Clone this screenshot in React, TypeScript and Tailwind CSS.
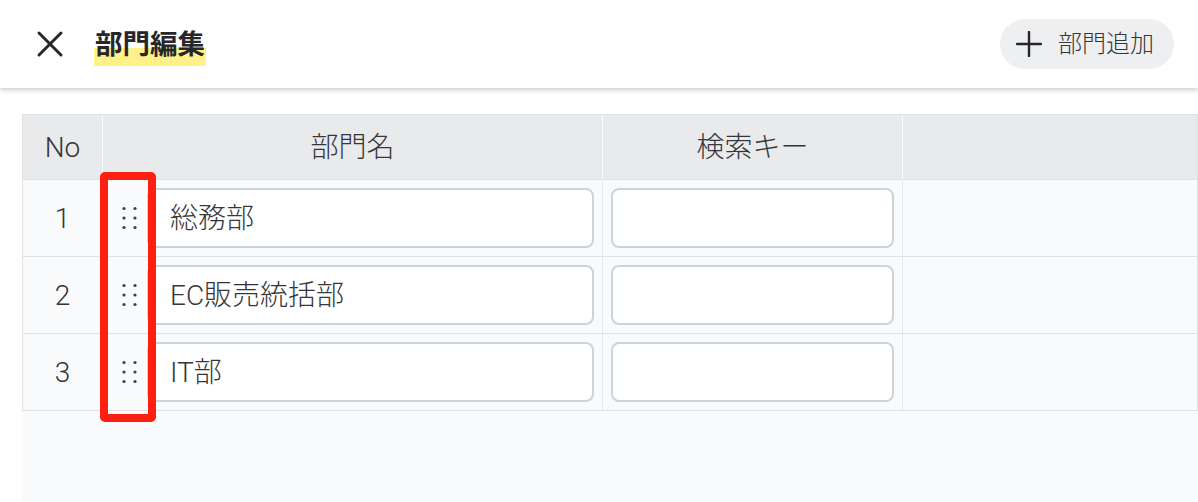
import React from "react";

const font = "font-['Roboto','Noto_Sans_CJK_JP',sans-serif]";

function Grip() {
  return (
    <svg width="16" height="24" viewBox="0 0 16 24" className="text-[#3f3f46]" fill="currentColor">
      {[2.5, 12, 21.5].map((y) => (
        <g key={y}>
          <circle cx="2" cy={y} r="1.6" />
          <circle cx="13" cy={y} r="1.6" />
        </g>
      ))}
    </svg>
  );
}

const rows = [
  { no: "1", name: "総務部" },
  { no: "2", name: "EC販売統括部" },
  { no: "3", name: "IT部" },
];

export default function App() {
  return (
    <div className={`${font} h-[502px] w-[1198px] overflow-hidden bg-white text-[#35363a]`}>
      <header className="relative z-10 flex h-[88px] items-center justify-between bg-white pl-[36px] pr-[24px] shadow-[0_2px_5px_rgba(0,0,0,0.2)]">
        <div className="flex items-center gap-[30px]">
          <svg width="28" height="28" viewBox="0 0 28 28" fill="none" stroke="#27272a" strokeWidth="3" strokeLinecap="round">
            <path d="M3 3 L25 25 M25 3 L3 25" />
          </svg>
          <h1 className="w-[112px] whitespace-nowrap bg-[linear-gradient(transparent_58%,#fff08a_58%)] pl-px pt-px text-[27.5px] leading-[43px] font-bold text-[#27272a]">
            部門編集
          </h1>
        </div>
        <button className="flex h-[50px] w-[174px] items-center gap-[16px] rounded-full bg-[#eeeff1] pl-[16px] text-[24px] font-light text-[#35363a]">
          <svg width="26" height="26" viewBox="0 0 26 26" fill="none" stroke="#27272a" strokeWidth="2.4" strokeLinecap="round">
            <path d="M13 1 V25 M1 13 H25" />
          </svg>
          部門追加
        </button>
      </header>

      <main className="pl-[22px] pt-[26px]">
        <div className="relative h-[388px] bg-[#f9fafb]">
          <div className="grid h-[66px] grid-cols-[80px_500px_300px_1fr] border border-[#dfe1e5] bg-[#e9eaec] text-[28px] font-light">
            <div className="flex items-center justify-center border-r border-[#f9fafb] pt-px">No</div>
            <div className="flex items-center justify-center border-r border-[#f9fafb] pt-px">部門名</div>
            <div className="flex items-center justify-center border-r border-[#f9fafb] pt-px">検索キー</div>
            <div />
          </div>
          {rows.map((r) => (
            <div
              key={r.no}
              className="grid h-[77px] grid-cols-[80px_500px_300px_1fr] border-x border-b border-[#dfe1e5] text-[28px] font-light"
            >
              <div className="flex items-center justify-center border-r border-[#e5e7eb] pt-px">{r.no}</div>
              <div className="flex items-center border-r border-[#e5e7eb] pr-[8px]">
                <div className="flex w-[44px] shrink-0 items-center justify-center pl-[9px]">
                  <Grip />
                </div>
                <div className="flex h-[60px] flex-1 items-center rounded-[8px] border-2 border-[#cbd3db] bg-white pl-[21px] pt-px">
                  {r.name}
                </div>
              </div>
              <div className="flex items-center border-r border-[#e5e7eb] px-[8px]">
                <div className="h-[60px] w-full rounded-[8px] border-2 border-[#cbd3db] bg-white" />
              </div>
              <div />
            </div>
          ))}
          <div className="absolute left-[78px] top-[58px] h-[250px] w-[56px] rounded-[5px] border-[8px] border-[#ff1f10]" />
        </div>
      </main>
    </div>
  );
}
